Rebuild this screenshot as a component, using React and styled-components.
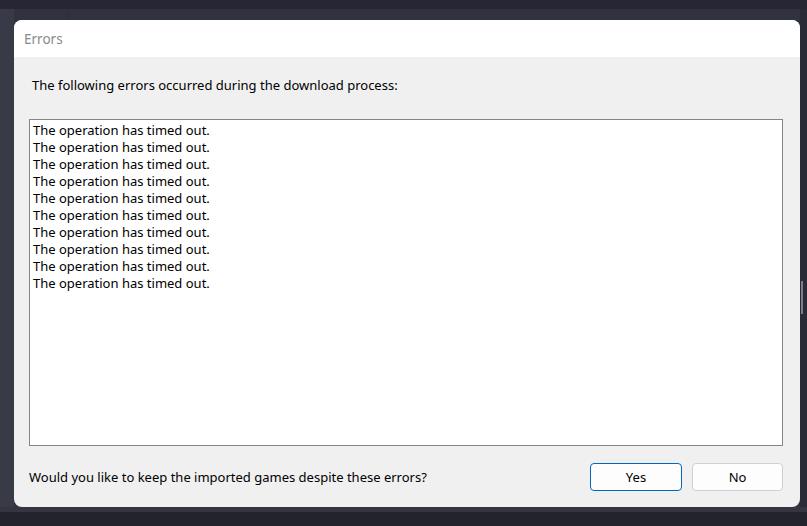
import React from 'react';
import styled, { createGlobalStyle } from 'styled-components';

const GlobalStyle = createGlobalStyle`
  html, body {
    margin: 0;
    padding: 0;
    background: #22232c;
  }
  * { box-sizing: border-box; }
`;

const Desktop = styled.div`
  width: 807px;
  height: 526px;
  overflow: hidden;
  padding: 20px 7px 0 14px;
  background:
    linear-gradient(#262733, #262733) 0 0 / 100% 9px no-repeat,
    linear-gradient(#393a47, #393a47) 0 9px / 14px 498px no-repeat,
    linear-gradient(#2c2d39, #2c2d39) 68px 0 / 1px 20px no-repeat,
    linear-gradient(#7c7d86, #7c7d86) 801px 281px / 2px 33px no-repeat,
    linear-gradient(#2a2b37, #2a2b37) 800px 9px / 7px 498px no-repeat,
    linear-gradient(#31323f, #31323f) 0 9px / 100% 498px no-repeat,
    linear-gradient(#34353f, #34353f) 0 507px / 100% 5px no-repeat,
    #22232c;
`;

const Dialog = styled.div`
  width: 786px;
  height: 487px;
  border-radius: 8px;
  overflow: hidden;
  background: #f0f0f0;
  display: flex;
  flex-direction: column;
  font-family: "Noto Sans", "Segoe UI", sans-serif;
  font-size: 13px;
  color: #000;
`;

const TitleBar = styled.div`
  height: 37px;
  flex-shrink: 0;
  background: #fff;
  display: flex;
  align-items: center;
  padding: 0 10px;
  color: #8b8b8b;
  font-size: 13.5px;
`;

const Body = styled.div`
  flex: 1;
  display: flex;
  flex-direction: column;
  padding: 20px 17px 16px 15px;
`;

const Intro = styled.div`
  padding-left: 3px;
  line-height: 17px;
  height: 42px;
`;

const LogBox = styled.div`
  height: 327px;
  flex-shrink: 0;
  background: #fff;
  border: 1px solid #82858c;
  padding: 2px 3px;
  line-height: 17px;
`;

const Footer = styled.div`
  flex: 1;
  display: flex;
  align-items: flex-end;
  justify-content: space-between;
`;

const Question = styled.span`
  font-size: 13px;
  line-height: 28px;
`;

const Buttons = styled.div`
  display: flex;
  gap: 10px;
`;

const Button = styled.button`
  width: ${p => (p.$primary ? 92 : 91)}px;
  height: 28px;
  border-radius: 4px;
  border: 1px solid ${p => (p.$primary ? '#0067c0' : '#d0d0d0')};
  background: #fdfdfd;
  font-family: inherit;
  font-size: 13px;
  color: #000;
  padding: 0;
`;

const lines = Array.from({ length: 10 }, () => 'The operation has timed out.');

export default function App() {
  return (
    <>
      <GlobalStyle />
      <Desktop>
        <Dialog>
          <TitleBar>Errors</TitleBar>
          <Body>
            <Intro>The following errors occurred during the download process:</Intro>
            <LogBox>
              {lines.map((l, i) => (
                <div key={i}>{l}</div>
              ))}
            </LogBox>
            <Footer>
              <Question>Would you like to keep the imported games despite these errors?</Question>
              <Buttons>
                <Button $primary>Yes</Button>
                <Button>No</Button>
              </Buttons>
            </Footer>
          </Body>
        </Dialog>
      </Desktop>
    </>
  );
}
